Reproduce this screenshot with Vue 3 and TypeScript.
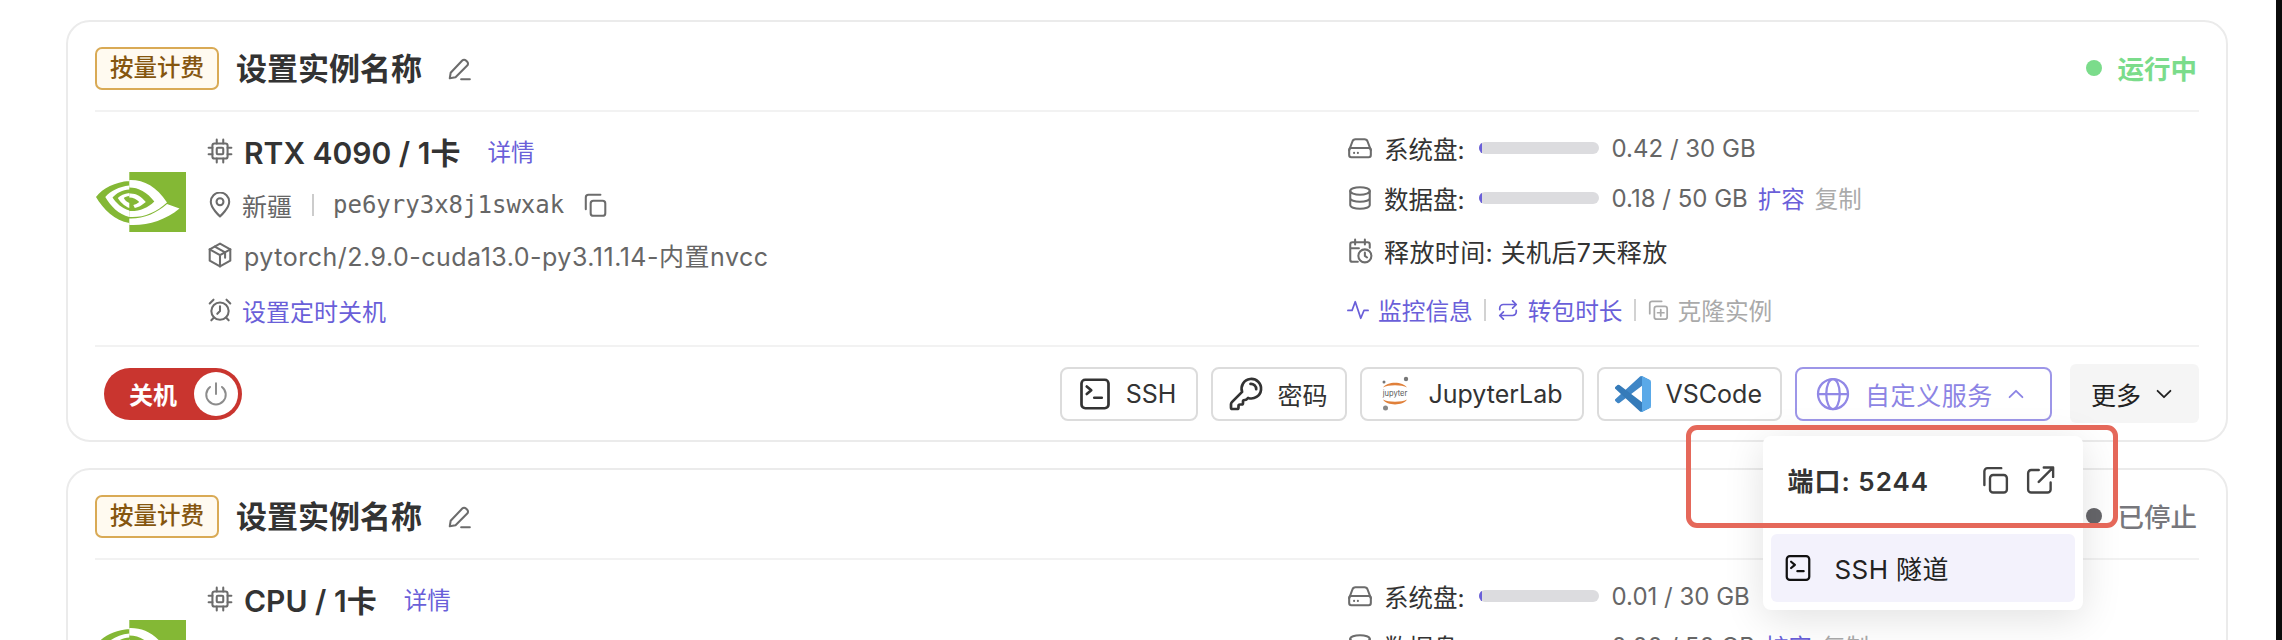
<template>
  <div class="page">
    <svg class="defs" aria-hidden="true">
      <symbol id="i-chip" viewBox="0 0 24 24"><rect x="5" y="5" width="14" height="14" rx="2" /><rect x="9" y="9" width="6" height="6" rx="1" /><path d="M9 1.5V5M15 1.5V5M9 19v3.500M15 19v3.500M1.500 9H5M1.500 15H5M19 9h3.500M19 15h3.500" /></symbol>
      <symbol id="i-pencil" viewBox="0 0 24 24"><path d="M3.5 20.5l.8-5L15 4.200a2.400 2.400 0 0 1 3.400 0l1.200 1.200a2.400 2.400 0 0 1 0 3.400L8.800 19.600z" /><path d="M14 21.500h8" /></symbol>
      <symbol id="i-pin" viewBox="0 0 24 24"><path d="M12 22.500s-8.500-7.500-8.500-13.500a8.500 8.500 0 0 1 17 0c0 6-8.500 13.500-8.500 13.500z" /><circle cx="12" cy="9" r="3.2" /></symbol>
      <symbol id="i-copy" viewBox="0 0 24 24"><rect x="8" y="8" width="13.5" height="14" rx="2.5" /><path d="M3.500 16V5A2.500 2.500 0 0 1 6 2.500h11" /></symbol>
      <symbol id="i-cube" viewBox="0 0 24 24"><path d="M12 1.500l9.500 5.300v10.400L12 22.500l-9.500-5.300V6.800z" /><path d="M2.500 6.800l9.500 5.300 9.500-5.300M12 12.100v10.400M7.200 4.200l9.500 5.300v5" /></symbol>
      <symbol id="i-alarm" viewBox="0 0 24 24"><circle cx="12" cy="13" r="8" /><path d="M12 8.500V13l-2.500 2.500M2.500 6L6 2.500M21.500 6L18 2.500M6.500 19L4 21.500M17.500 19l2.500 2.500" /></symbol>
      <symbol id="i-disk" viewBox="0 0 24 24"><path d="M2 14l3-8a3 3 0 0 1 2.800-2h8.400A3 3 0 0 1 19 6l3 8" /><rect x="2" y="12" width="20" height="8.5" rx="2" /><path d="M6.500 16.500h.1M10 16.500h.1" /></symbol>
      <symbol id="i-db" viewBox="0 0 24 24"><ellipse cx="12" cy="5.5" rx="9" ry="3.5" /><path d="M3 5.500v13c0 2 4 3.500 9 3.500s9-1.500 9-3.500v-13M3 12c0 2 4 3.500 9 3.500s9-1.500 9-3.500" /></symbol>
      <symbol id="i-release" viewBox="0 0 24 24"><path d="M21 9V6a2 2 0 0 0-2-2H5a2 2 0 0 0-2 2v14a2 2 0 0 0 2 2h5M7.500 1.500V6M16.500 1.500V6M3 9.500h8" /><circle cx="16.5" cy="16.5" r="6" /><path d="M16.500 13.500v3l2 1.500" /></symbol>
      <symbol id="i-pulse" viewBox="0 0 24 24"><path d="M1 12.500h4.500L9 3l6 18 3.500-8.500H23" /></symbol>
      <symbol id="i-swap" viewBox="0 0 24 24"><path d="M17 2l4 4-4 4M3 11.500V10a4 4 0 0 1 4-4h14M7 22l-4-4 4-4M21 12.500V14a4 4 0 0 1-4 4H3" /></symbol>
      <symbol id="i-clone" viewBox="0 0 24 24"><rect x="8" y="8" width="14" height="14" rx="2.5" /><path d="M3 16V5A2.500 2.500 0 0 1 5.500 2.500H16M15 11.500v7M11.500 15h7" /></symbol>
      <symbol id="i-term" viewBox="0 0 24 24"><rect x="3" y="2.5" width="18" height="19" rx="2.5" /><path d="M6.500 7l3 2.500-3 2.500M11.500 14.500h5" /></symbol>
      <symbol id="i-key" viewBox="0 0 24 24"><path d="M2.600 17.400A2 2 0 0 0 2 18.800V21a1 1 0 0 0 1 1h3a1 1 0 0 0 1-1v-1a1 1 0 0 1 1-1h1a1 1 0 0 0 1-1v-1a1 1 0 0 1 1-1h.2a2 2 0 0 0 1.400-.6l.8-.8a6.500 6.500 0 1 0-4-4z" /><path d="M15 5.200a3.500 3.500 0 0 1 3.800 3.600" /></symbol>
      <symbol id="i-globe" viewBox="0 0 24 24"><circle cx="12" cy="12" r="10" /><ellipse cx="12" cy="12" rx="4.5" ry="10" /><path d="M2 12h20" /></symbol>
      <symbol id="i-up" viewBox="0 0 24 24"><path d="M5 15.500l7-7 7 7" /></symbol>
      <symbol id="i-down" viewBox="0 0 24 24"><path d="M5 8.500l7 7 7-7" /></symbol>
      <symbol id="i-power" viewBox="0 0 24 24"><path d="M12 2v10M17.500 5.500a9 9 0 1 1-11 0" /></symbol>
      <symbol id="i-open" viewBox="0 0 24 24"><path d="M11 4H5a2.500 2.500 0 0 0-2.500 2.500v13A2.500 2.500 0 0 0 5 22h13a2.500 2.500 0 0 0 2.500-2.500V14M11 13.500l11-11M15 2h7.500v7.500" /></symbol>
    </svg>

    <div class="screen">
      <section v-for="(item, index) in instances" :key="item.gpu" class="card">
        <header class="card-head">
          <span class="billing">按量计费</span>
          <h2 class="name">设置实例名称</h2>
          <svg class="ico pencil"><use href="#i-pencil" /></svg>
          <span class="status" :class="item.running ? 'on' : 'off'">
            <i class="dot"></i>{{ item.running ? '运行中' : '已停止' }}
          </span>
        </header>

        <div class="card-body">
          <div class="spec">
            <svg class="nvidia" viewBox="0 0 91 60">
              <path fill="#84b835" d="M34.300 0H91v60H34.300zM34.300 9C20 10 8 16 1 25c7 12 19 24 33.300 26z" />
              <path fill="#fff" d="M34.300 13.500C24 14.500 15.500 19 10.300 25c5 9 13.500 17.500 24 20v-6.500C26.500 36 21 31 17.500 25.500c4-4.500 10-7.500 16.800-8zM34.300 21c-5 .5-9 2.500-11.500 5 2 3.500 6.500 8 11.500 10v-5c-2.500-1-4.500-3-5.500-5 1.200-1 3.200-1.800 5.500-2z" />
              <path fill="#fff" d="M34.300 8c14-.5 27 6 37.700 22.500-11 10-24 15.500-37.700 14.500v-6c10 .5 18.500-3 25-9.500C52 20 43.500 15.500 34.300 15.500zM34.300 21.500c6.500-.5 12 3 16.500 8.500-4 3.500-8 5.500-11 6l-1.500-3c2-.3 4-1.500 6-3-2.500-2.500-6-4.500-10-4.500zM34.300 46.500c14 .5 27-5 37.700-14.500l12.500 4.500C70 48.500 52 54 34.300 53z" />
            </svg>
            <div class="spec-rows">
              <div class="row gpu">
                <svg class="ico"><use href="#i-chip" /></svg>
                <strong>{{ item.gpu }}</strong>
                <a class="link detail">详情</a>
              </div>
              <div class="row muted">
                <svg class="ico"><use href="#i-pin" /></svg>
                <span>{{ item.region }}</span>
                <i class="bar"></i>
                <span class="mono">{{ item.code }}</span>
                <svg class="ico copy"><use href="#i-copy" /></svg>
              </div>
              <div class="row muted">
                <svg class="ico"><use href="#i-cube" /></svg>
                <span class="image">{{ item.image }}</span>
              </div>
              <div class="row timer">
                <svg class="ico"><use href="#i-alarm" /></svg>
                <a class="link timer-link">设置定时关机</a>
              </div>
            </div>
          </div>

          <div class="usage">
            <div v-for="disk in item.disks" :key="disk.label" class="row">
              <svg class="ico"><use :href="disk.icon" /></svg>
              <span class="label">{{ disk.label }}:</span>
              <span class="track"><span class="fill" :style="{ width: (disk.used / disk.total) * 100 + '%' }"></span></span>
              <span class="amount">{{ disk.used.toFixed(2) }} / {{ disk.total }} GB</span>
              <template v-if="disk.extra">
                <a class="link expand">扩容</a>
                <span class="faint duplicate">复制</span>
              </template>
            </div>
            <div class="row">
              <svg class="ico"><use href="#i-release" /></svg>
              <span class="release">释放时间: 关机后7天释放</span>
            </div>
            <div class="row links">
              <svg class="ico tiny purple"><use href="#i-pulse" /></svg>
              <a class="link small">监控信息</a>
              <i class="sep"></i>
              <svg class="ico tiny purple"><use href="#i-swap" /></svg>
              <a class="link small">转包时长</a>
              <i class="sep"></i>
              <svg class="ico tiny grey"><use href="#i-clone" /></svg>
              <span class="faint small">克隆实例</span>
            </div>
          </div>
        </div>

        <footer class="card-foot">
          <div class="toggle">
            <span>关机</span>
            <span class="knob"><svg class="ico power"><use href="#i-power" /></svg></span>
          </div>
          <div class="actions">
            <button class="btn ssh-btn"><svg class="ico dark"><use href="#i-term" /></svg>SSH</button>
            <button class="btn key-btn"><svg class="ico dark"><use href="#i-key" /></svg>密码</button>
            <button class="btn lab-btn">
              <svg class="jupyter" viewBox="0 0 30 35">
                <circle cx="4" cy="6" r="1.5" fill="#777" />
                <circle cx="26" cy="3" r="2.2" fill="#777" />
                <circle cx="5.5" cy="32" r="2.5" fill="#888" />
                <path fill="#e0803a" d="M3 11.500C7 5 23 5 27 11.500 22 8.500 8 8.500 3 11.500zM3 23.500c4 6.500 20 6.500 24 0-5 3-19 3-24 0z" />
                <text x="15" y="20" text-anchor="middle" class="jupyter-word">jupyter</text>
              </svg>
              JupyterLab
            </button>
            <button class="btn code-btn">
              <svg class="vscode" viewBox="0 0 100 100">
                <path fill="#3f86c6" d="M96.500 10.800 75.900.9a6.200 6.200 0 0 0-7.100 1.200L1.400 63.600a4.200 4.200 0 0 0 0 6.200l5.500 5a4.200 4.200 0 0 0 5.300.2L93.400 13.500c2.700-2 6.600-.1 6.600 3.200v-.2a6.200 6.200 0 0 0-3.500-5.700z" />
                <path fill="#357bb9" d="M96.500 89.200 75.900 99.100a6.200 6.200 0 0 1-7.100-1.200L1.400 36.400a4.200 4.200 0 0 1 0-6.200l5.500-5a4.200 4.200 0 0 1 5.300-.2l81.200 61.500c2.700 2 6.600.1 6.600-3.200v.2a6.200 6.200 0 0 1-3.500 5.700z" />
                <path fill="#5aa9e8" d="M75.900 99.100a6.200 6.200 0 0 1-7.200-1.200c2.300 2.300 6.300.7 6.300-2.600V4.700c0-3.300-4-4.900-6.300-2.600A6.200 6.200 0 0 1 75.900.9l20.600 9.900a6.250 6.250 0 0 1 3.500 5.600v67.200a6.250 6.250 0 0 1-3.500 5.600z" />
              </svg>
              VSCode
            </button>
            <div class="dropdown">
              <button class="btn active">
                <svg class="ico globe"><use href="#i-globe" /></svg>
                <span class="service">自定义服务</span>
                <svg class="ico chevron"><use href="#i-up" /></svg>
              </button>
              <div v-if="index === 0" class="popover">
                <div class="port">
                  <span>端口: 5244</span>
                  <svg class="ico port-ico"><use href="#i-copy" /></svg>
                  <svg class="ico port-ico"><use href="#i-open" /></svg>
                </div>
                <div class="tunnel"><svg class="ico tunnel-ico"><use href="#i-term" /></svg>SSH 隧道</div>
                <div class="callout"></div>
              </div>
            </div>
            <button class="btn more">更多<svg class="ico chevron"><use href="#i-down" /></svg></button>
          </div>
        </footer>
      </section>
    </div>
    <div class="edge"></div>
  </div>
</template>

<script setup lang="ts">
interface Disk {
  label: string
  icon: string
  used: number
  total: number
  extra: boolean
}

interface Instance {
  gpu: string
  running: boolean
  region: string
  code: string
  image: string
  disks: Disk[]
}

const instances: Instance[] = [
  {
    gpu: 'RTX 4090 / 1卡',
    running: true,
    region: '新疆',
    code: 'pe6yry3x8j1swxak',
    image: 'pytorch/2.9.0-cuda13.0-py3.11.14-内置nvcc',
    disks: [
      { label: '系统盘', icon: '#i-disk', used: 0.42, total: 30, extra: false },
      { label: '数据盘', icon: '#i-db', used: 0.18, total: 50, extra: true }
    ]
  },
  {
    gpu: 'CPU / 1卡',
    running: false,
    region: '新疆',
    code: 'pe6yry3x8j1swxak',
    image: 'pytorch/2.9.0-cuda13.0-py3.11.14-内置nvcc',
    disks: [
      { label: '系统盘', icon: '#i-disk', used: 0.01, total: 30, extra: false },
      { label: '数据盘', icon: '#i-db', used: 0, total: 50, extra: true }
    ]
  }
]
</script>

<style>
html,
body {
  margin: 0;
  background: #fff;
  overflow: hidden;
}
</style>

<style scoped>
.page {
  display: flex;
  height: 640px;
  overflow: hidden;
  background: #fff;
  color: #333;
  font-family: Inter, "Noto Sans CJK SC", sans-serif;
  font-size: 25px;
}

.defs {
  position: absolute;
  width: 0;
  height: 0;
}

.screen {
  flex: 1;
  min-width: 0;
  padding: 20px 48px 0 66px;
}

.edge {
  width: 6px;
  background: #0c0c0c;
}

.card {
  box-sizing: border-box;
  height: 422px;
  margin-bottom: 26px;
  padding: 0 27px;
  border: 2px solid #ebebeb;
  border-radius: 24px;
  background: #fff;
}

.card-head {
  display: flex;
  align-items: center;
  padding: 25px 2px 20px 0;
  border-bottom: 2px solid #f2f2f2;
}

.billing {
  box-sizing: border-box;
  width: 124px;
  height: 43px;
  border: 2px solid #d9aa55;
  border-radius: 7px;
  background: #fffaf0;
  color: #85560f;
  font-size: 23.5px;
  font-weight: 500;
  line-height: 38px;
  text-align: center;
}

.name {
  margin: 0 0 0 17px;
  color: #333;
  font-size: 31px;
  font-weight: 700;
  line-height: 43px;
}

.ico {
  flex: none;
  width: 26px;
  height: 26px;
  fill: none;
  stroke: #6c6c6c;
  stroke-width: 1.9;
  stroke-linecap: round;
  stroke-linejoin: round;
}

.pencil {
  margin-left: 24px;
}

.status {
  display: flex;
  align-items: center;
  gap: 16px;
  margin-top: -2px;
  margin-left: auto;
  font-size: 26.5px;
  font-weight: 500;
}

.status.on {
  color: #7bdc8b;
  font-weight: 700;
}

.status.off {
  color: #77777c;
}

.dot {
  width: 16px;
  height: 16px;
  border-radius: 50%;
  background: currentColor;
}

.status.off .dot {
  background: #66666a;
}

.card-body {
  display: grid;
  grid-template-columns: 1252px 1fr;
  height: 233px;
  border-bottom: 2px solid #f2f2f2;
}

.spec {
  display: flex;
  align-items: flex-start;
  gap: 21px;
  padding-top: 21px;
}

.nvidia {
  flex: none;
  width: 91px;
  height: 60px;
  margin-top: 39px;
}

.spec-rows {
  display: grid;
  grid-template-rows: 54px 50px 55px 36px;
}

.usage {
  display: grid;
  grid-template-rows: 50px 53px 59px 36px;
  padding-top: 18px;
}

.row {
  display: flex;
  align-items: center;
  gap: 11px;
  height: 36px;
  white-space: nowrap;
}

.row.gpu strong {
  font-size: 30px;
  font-weight: 600;
}

.row.muted {
  gap: 9px;
  color: #666;
}

.row.timer {
  gap: 9px;
}

.image {
  margin-left: 2px;
  letter-spacing: 0.5px;
}

.link {
  color: #6a5fd9;
}

.detail {
  margin-left: 16px;
  font-size: 23.5px;
}

.timer-link {
  font-size: 24px;
}

.small {
  font-size: 23.7px;
}

.bar {
  width: 2px;
  height: 22px;
  margin: 0 10.5px;
  background: #ccc;
}

.mono {
  font-family: "DejaVu Sans Mono", monospace;
  font-size: 24px;
}

.copy {
  margin-left: 9px;
}

.label {
  color: #333;
  font-size: 24.5px;
}

.release {
  color: #333;
  letter-spacing: 0.4px;
}

.track {
  width: 120px;
  height: 12px;
  margin-left: 3px;
  border-radius: 6px;
  background: #dcdcdf;
  overflow: hidden;
}

.fill {
  display: block;
  min-width: 3px;
  height: 100%;
  background: #6a5fd9;
}

.amount {
  margin-left: 2px;
  color: #666;
  font-size: 24px;
}

.expand {
  margin-left: -1px;
  font-size: 23.5px;
}

.faint {
  color: #aaa;
}

.duplicate {
  margin-left: -1px;
  font-size: 23.5px;
}

.links {
  gap: 9px;
}

.tiny {
  width: 22px;
  height: 22px;
}

.purple {
  stroke: #6a5fd9;
}

.grey {
  stroke: #aaa;
}

.sep {
  width: 2px;
  height: 22px;
  margin: 0 2px;
  background: #d2d2d2;
}

.card-foot {
  display: flex;
  align-items: center;
  justify-content: space-between;
  height: 93px;
  padding-left: 9px;
}

.toggle {
  display: flex;
  align-items: center;
  justify-content: space-between;
  box-sizing: border-box;
  width: 138px;
  height: 52px;
  padding: 0 4px 0 25px;
  border-radius: 26px;
  background: #c9352f;
  color: #fff;
  font-size: 24px;
  font-weight: 700;
}

.knob {
  display: flex;
  align-items: center;
  justify-content: center;
  width: 44px;
  height: 44px;
  border-radius: 50%;
  background: #fff;
}

.power {
  stroke: #8c8c8c;
  stroke-width: 1.8;
}

.actions {
  display: flex;
  align-items: center;
  gap: 13px;
}

.btn {
  display: flex;
  align-items: center;
  gap: 18px;
  box-sizing: border-box;
  height: 54px;
  padding: 0 18px;
  border: 2px solid #dcdcdc;
  border-radius: 8px;
  background: #fff;
  color: #333;
  font: inherit;
  white-space: nowrap;
}

.btn .ico.dark {
  width: 36px;
  height: 36px;
  margin: 0 -3px;
  stroke: #333;
  stroke-width: 1.8;
}

.ssh-btn {
  gap: 16px;
  padding-right: 20px;
}

.key-btn {
  gap: 16px;
}

.lab-btn {
  padding-right: 19px;
}

.jupyter {
  flex: none;
  width: 30px;
  height: 35px;
}

.jupyter-word {
  fill: #555;
  font-size: 7.5px;
}

.code-btn {
  gap: 15px;
  padding-left: 16px;
}

.vscode {
  flex: none;
  width: 36px;
  height: 36px;
}

.dropdown {
  position: relative;
  z-index: 5;
}

.active {
  gap: 14px;
  padding-right: 23px;
  border-color: #9d96e8;
  color: #8c84e4;
}

.service {
  letter-spacing: 0.6px;
}

.globe {
  width: 36px;
  height: 36px;
  stroke: #9188e6;
  stroke-width: 1.5;
}

.chevron {
  width: 22px;
  height: 22px;
  margin-left: -2px;
  stroke: #8c84e4;
  stroke-width: 2;
}

.more {
  gap: 14px;
  height: 59px;
  margin-left: 5px;
  padding: 0 24px 0 21px;
  border: none;
  border-radius: 6px;
  background: #f5f5f5;
  color: #222;
}

.more .chevron {
  stroke: #222;
}

.popover {
  position: absolute;
  top: calc(100% + 15px);
  left: 50%;
  box-sizing: border-box;
  width: 320px;
  margin-left: -160px;
  padding: 8px;
  border-radius: 8px;
  background: #fff;
  box-shadow: 0 8px 40px rgba(0, 0, 0, 0.12);
}

.port {
  display: flex;
  align-items: center;
  gap: 15px;
  height: 72px;
  margin-bottom: 18px;
  padding: 0 20px 0 16px;
  font-size: 26px;
  font-weight: 600;
  letter-spacing: 1px;
}

.port span {
  margin-right: auto;
}

.port-ico {
  width: 30px;
  height: 30px;
  stroke: #444;
}

.tunnel {
  display: flex;
  align-items: center;
  gap: 21px;
  height: 68px;
  padding-left: 12px;
  border-radius: 6px;
  background: #f3f2fc;
  color: #222;
  font-size: 26px;
  letter-spacing: 0.4px;
}

.tunnel-ico {
  width: 30px;
  height: 30px;
  stroke: #111;
  stroke-width: 1.8;
}

.callout {
  position: absolute;
  top: -11px;
  left: -77px;
  box-sizing: border-box;
  width: 432px;
  height: 103px;
  border: 5.5px solid #e5685a;
  border-radius: 11px;
}
</style>
